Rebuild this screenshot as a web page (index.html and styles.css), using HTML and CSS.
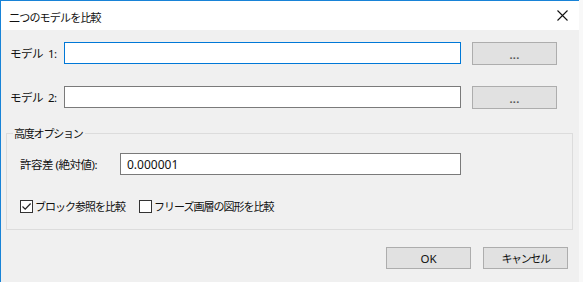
FILE: index.html
```html
<!DOCTYPE html>
<html lang="ja">
<head>
<meta charset="utf-8">
<title>二つのモデルを比較</title>
<link rel="stylesheet" href="styles.css">
</head>
<body>
<div class="window">
  <div class="titlebar">
    <span class="title">二つのモデルを比較</span>
    <span class="close" aria-label="閉じる">
      <svg width="11" height="11" viewBox="0 0 11 11"><path d="M0.5 0.5 L10.5 10.5 M10.5 0.5 L0.5 10.5" stroke="#111" stroke-width="1.1" fill="none"/></svg>
    </span>
  </div>
  <div class="client">
    <div class="row">
      <span class="label model-label">モデル&nbsp; 1:</span>
      <div class="textbox focused"></div>
      <button class="btn browse">...</button>
    </div>
    <div class="row row2">
      <span class="label model-label">モデル&nbsp; 2:</span>
      <div class="textbox"></div>
      <button class="btn browse">...</button>
    </div>
    <fieldset class="group">
      <legend>高度オプション</legend>
      <div class="row tol-row">
        <span class="label tol-label">許容差 (絶対値):</span>
        <div class="textbox tol-box"><span class="value">0.000001</span></div>
      </div>
      <div class="checks">
        <label class="check">
          <span class="box"><svg width="11" height="11" viewBox="0 0 11 11"><path d="M1.5 5.5 L4.2 8.2 L9.6 2.5" stroke="#222" stroke-width="1.2" fill="none"/></svg></span>
          <span class="ctext">ブロック参照を比較</span>
        </label>
        <label class="check second">
          <span class="box"></span>
          <span class="ctext">フリーズ画層の図形を比較</span>
        </label>
      </div>
    </fieldset>
    <div class="footer">
      <button class="btn action">OK</button>
      <button class="btn action cancel">キャンセル</button>
    </div>
  </div>
</div>
</body>
</html>
```

FILE: styles.css
```css
html, body {
  margin: 0;
  padding: 0;
  background: #f8f8f8;
}
body {
  font-family: "Noto Sans", "Noto Sans CJK JP", sans-serif;
  font-size: 12px;
  color: #000;
}
.window {
  width: 578px;
  height: 281px;
  border-left: 1px solid #1883d7;
  border-top: 1px solid #1883d7;
  background: #f0f0f0;
  display: flex;
  flex-direction: column;
}
.titlebar {
  height: 29px;
  background: #fff;
  display: flex;
  align-items: center;
  justify-content: space-between;
  padding-left: 8px;
  padding-right: 11px;
}
.title {
  font-family: "Noto Sans CJK JP", sans-serif;
  font-size: 11px;
  letter-spacing: -0.8px;
  color: #111;
  margin-top: 2px;
}
.close {
  display: flex;
  width: 11px;
  height: 11px;
  margin-top: -1px;
}
.client {
  flex: 1;
  padding-top: 12px;
}
.row {
  display: flex;
  align-items: center;
  height: 22px;
  margin-left: 9px;
}
.row2 {
  margin-top: 22px;
}
.label {
  font-family: "Noto Sans", "Noto Sans CJK JP", sans-serif;
  font-size: 11.5px;
  letter-spacing: -0.5px;
  color: #111;
}
.model-label {
  width: 54px;
  white-space: nowrap;
}
.textbox {
  box-sizing: border-box;
  height: 22px;
  width: 397px;
  background: #fff;
  border: 1px solid #7a7a7a;
  display: flex;
  align-items: center;
}
.textbox.focused {
  border-color: #0078d7;
}
.btn {
  box-sizing: border-box;
  height: 23px;
  width: 85px;
  background: #e1e1e1;
  border: 1px solid #adadad;
  padding: 0;
  font-family: "Noto Sans", "Noto Sans CJK JP", sans-serif;
  font-size: 11.5px;
  color: #111;
}
.browse {
  margin-left: 11px;
  font-size: 11px;
  font-weight: 700;
  letter-spacing: 0.3px;
  padding-top: 2px;
  color: #555;
}
.group {
  box-sizing: border-box;
  width: 567px;
  margin: 17px 0 0 5px;
  padding: 0 6px 15px 6px;
  border: 1px solid #dcdcdc;
  min-width: 0;
}
.group legend {
  padding: 0 2px 0 1px;
  line-height: 16px;
  font-family: "Noto Sans CJK JP", sans-serif;
  font-size: 11px;
  letter-spacing: -1.2px;
  color: #111;
}
.tol-row {
  margin-left: 7px;
  margin-top: 12px;
}
.tol-label {
  width: 100px;
}
.tol-box {
  width: 341px;
}
.value {
  font-family: "Noto Sans", sans-serif;
  font-size: 12px;
  padding-left: 6px;
  color: #111;
}
.checks {
  display: flex;
  align-items: center;
  margin-left: 7px;
  margin-top: 23px;
  height: 16px;
}
.check {
  display: flex;
  align-items: center;
}
.check.second {
  margin-left: 14px;
}
.box {
  box-sizing: border-box;
  width: 13px;
  height: 13px;
  border: 1px solid #333;
  background: #fff;
  display: flex;
  align-items: center;
  justify-content: center;
}
.ctext {
  font-family: "Noto Sans CJK JP", sans-serif;
  font-size: 11px;
  letter-spacing: -1px;
  margin-left: 2px;
  color: #111;
}
.footer {
  display: flex;
  justify-content: flex-end;
  gap: 12px;
  margin-top: 17px;
  margin-right: 11px;
}
.action {
  height: 22px;
}
.cancel {
  font-size: 11px;
  letter-spacing: -1.4px;
}
```
